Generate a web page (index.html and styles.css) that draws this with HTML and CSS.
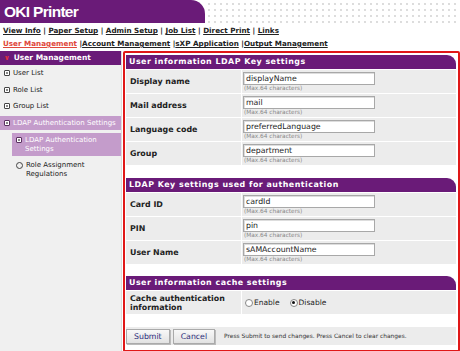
FILE: index.html
```html
<!DOCTYPE html>
<html>
<head>
<meta charset="utf-8">
<link rel="stylesheet" href="styles.css">
</head>
<body>
<div class="top">
  <div class="brand">OKI Printer</div>
  <div class="dots"></div>
</div>
<div class="nav">
  <div class="nav-line"><a>View Info</a> | <a>Paper Setup</a> | <a>Admin Setup</a> | <a>Job List</a> | <a>Direct Print</a> | <a>Links</a></div>
  <div class="nav-line"><a class="cur">User Management</a> |<a>Account Management</a> |<a>sXP Application</a> |<a>Output Management</a></div>
</div>
<div class="body">
  <div class="side">
    <div class="side-head"><span class="chev">&#8744;</span>User Management</div>
    <div class="side-item"><span class="box"></span>User List</div>
    <div class="side-item"><span class="box"></span>Role List</div>
    <div class="side-item"><span class="box"></span>Group List</div>
    <div class="side-open"><span class="box minus"></span>LDAP Authentication Settings</div>
    <div class="sub sub-sel"><span class="box"></span><span>LDAP Authentication<br>Settings</span></div>
    <div class="sub"><span class="circ"></span><span>Role Assignment<br>Regulations</span></div>
  </div>
  <div class="main">
    <div class="sec-head">User information LDAP Key settings</div>
    <div class="row"><div class="lab">Display name</div><div class="val"><div class="inp">displayName</div><div class="hint">(Max.64 characters)</div></div></div>
    <div class="row"><div class="lab">Mail address</div><div class="val"><div class="inp">mail</div><div class="hint">(Max.64 characters)</div></div></div>
    <div class="row"><div class="lab">Language code</div><div class="val"><div class="inp">preferredLanguage</div><div class="hint">(Max.64 characters)</div></div></div>
    <div class="row"><div class="lab">Group</div><div class="val"><div class="inp">department</div><div class="hint">(Max.64 characters)</div></div></div>

    <div class="sec-head gap">LDAP Key settings used for authentication</div>
    <div class="row"><div class="lab">Card ID</div><div class="val"><div class="inp">cardId</div><div class="hint">(Max.64 characters)</div></div></div>
    <div class="row"><div class="lab">PIN</div><div class="val"><div class="inp">pin</div><div class="hint">(Max.64 characters)</div></div></div>
    <div class="row"><div class="lab">User Name</div><div class="val"><div class="inp">sAMAccountName</div><div class="hint">(Max.64 characters)</div></div></div>

    <div class="sec-head gap2">User information cache settings</div>
    <div class="row"><div class="lab">Cache authentication information</div><div class="val radios"><label><span class="radio"></span>Enable</label><label><span class="radio on"></span>Disable</label></div></div>

    <div class="actions">
      <span class="btn">Submit</span><span class="btn">Cancel</span>
      <span class="note">Press Submit to send changes. Press Cancel to clear changes.</span>
    </div>
  </div>
</div>
</body>
</html>
```
FILE: styles.css
```css
* { box-sizing: border-box; }
html, body { margin: 0; padding: 0; background: #fff; }
body { width: 460px; height: 351px; overflow: hidden; font-family: "DejaVu Sans", sans-serif; color: #222; }

.top { display: flex; height: 23px; }
.brand { width: 205px; background: #6a1b78; color: #fff; font-family: "Liberation Sans", Arial, sans-serif; font-weight: bold; font-size: 15.5px; line-height: 23px; padding-left: 4px; border-top-right-radius: 14px; letter-spacing: -0.7px; }
.dots { flex: 1; background-image: radial-gradient(circle, #dcdcdc 0.7px, transparent 1px); background-size: 6px 6px; background-position: 1px 1px; }

.nav { padding: 1px 0 0 3px; }
.nav-line { font-size: 7.2px; font-weight: bold; line-height: 13px; color: #222; white-space: nowrap; }
.nav-line a { text-decoration: underline; color: #222; }
.nav-line a.cur { color: #e0483c; }

.body { display: flex; margin-top: 1px; height: 303px; }
.side { width: 122px; background: #f0f0f0; border-right: 1px solid #ddd; font-size: 7px; }
.side-head { background: #6a1b78; color: #fff; font-weight: bold; height: 14px; line-height: 14px; padding-left: 4px; font-size: 7.5px; }
.chev { color: #e0303c; font-size: 7px; margin-right: 4px; font-weight: bold; }
.side-item { display: flex; align-items: center; height: 16.5px; padding-left: 4px; color: #222; }
.side-item:first-of-type { margin-top: 2px; }
.box { display: inline-block; width: 6px; height: 6px; border: 1px solid #444; border-radius: 1px; margin-right: 3px; background: #fff; position: relative; flex: none; }
.box::after { content: ""; position: absolute; left: 1px; top: 1px; width: 2px; height: 2px; background: #888; }
.side-open { display: flex; align-items: center; height: 14px; margin-top: 1px; background: #c49ccb; color: #fff; padding-left: 4px; white-space: nowrap; }
.side-open .box, .sub-sel .box { border-color: #5a3060; }
.sub { display: flex; align-items: flex-start; margin-left: 12px; padding: 3px 0 3px 4px; line-height: 9px; color: #222; }
.sub-sel { background: #c49ccb; color: #fff; margin-top: 3px; height: 23px; }
.sub .box { margin-top: 1px; }
.sub:last-child { margin-top: 2px; }
.circ { display: inline-block; width: 7px; height: 7px; border: 1px solid #444; border-radius: 50%; margin-right: 3px; margin-top: 1px; flex: none; }

.main { flex: 1; margin-left: 1px; border: 2px solid #e01818; border-radius: 2px; padding: 2px 2px 4px 1px; height: 301px; background: #fff; }
.sec-head { background: #6a1b78; color: #fff; font-weight: bold; font-size: 7.9px; height: 14px; line-height: 14px; padding-left: 3px; border-top-right-radius: 9px; margin-bottom: 1px; white-space: nowrap; letter-spacing: 0.5px; }
.sec-head.gap { margin-top: 12px; }
.sec-head.gap2 { margin-top: 11px; }
.row { display: flex; height: 24px; }
.lab { width: 116px; background: #ececec; font-weight: bold; font-size: 7.9px; display: flex; align-items: center; padding-left: 4px; border-bottom: 1px solid #fff; border-right: 1px solid #fff; line-height: 9px; }
.val { flex: 1; background: #ececec; padding: 2px 0 0 1px; border-bottom: 1px solid #fff; }
.inp { width: 132px; height: 13px; border: 1px solid #a8a8a8; background: #fff; font-size: 7.8px; line-height: 11px; padding-left: 2px; color: #222; box-shadow: inset 1px 1px 0 #ddd; }
.hint { font-size: 5.8px; color: #888; line-height: 7px; padding-left: 1px; }
.radios { display: flex; align-items: center; padding-top: 0; font-size: 7.5px; gap: 10px; }
.radios label { display: flex; align-items: center; }
.radio { display: inline-block; width: 8px; height: 8px; border: 1px solid #888; border-radius: 50%; margin-right: 1px; background: #fff; position: relative; }
.radio.on::after { content: ""; position: absolute; left: 1.5px; top: 1.5px; width: 3px; height: 3px; border-radius: 50%; background: #111; }
.radios label:first-child { margin-left: 2px; }

.actions { display: flex; align-items: center; margin-top: 12px; background: #ececec; height: 18px; }
.btn { display: inline-block; height: 15px; line-height: 13px; border: 1px solid #aaa; background: linear-gradient(#f8f8f8, #e2e2e2); color: #2a2a7a; font-size: 7.8px; padding: 0 7px; margin-right: 3px; box-shadow: 1px 1px 0 #bbb; }
.note { font-size: 5.9px; color: #333; margin-left: 6px; white-space: nowrap; }
```
